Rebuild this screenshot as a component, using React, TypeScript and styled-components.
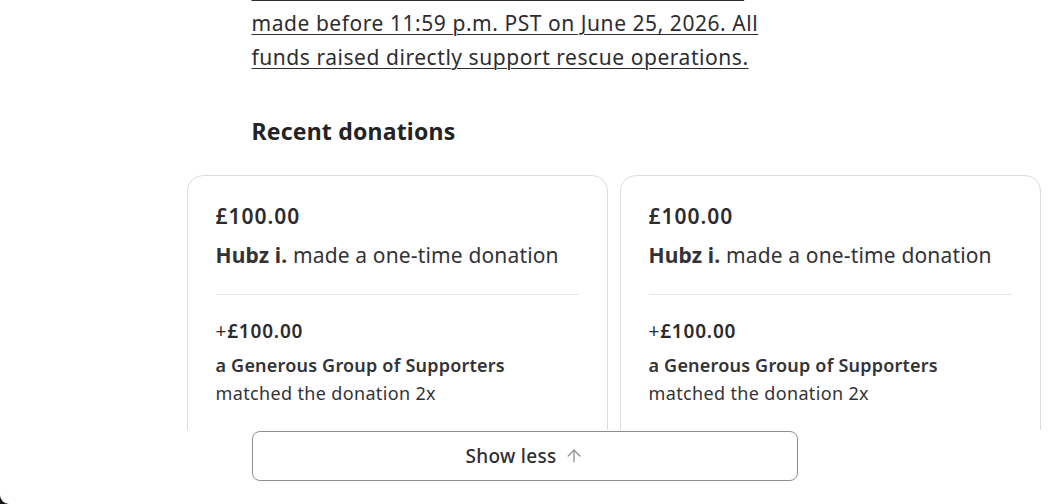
import React from "react";
import styled, { createGlobalStyle } from "styled-components";
import { ArrowUp } from "lucide-react";

const GlobalStyle = createGlobalStyle`
  html, body {
    margin: 0;
    padding: 0;
    background: #141414;
  }
  body {
    font-family: "Noto Sans", "Open Sans", "Liberation Sans", sans-serif;
    color: #2d2d2f;
    -webkit-font-smoothing: antialiased;
  }
  * { box-sizing: border-box; }
`;

const Panel = styled.div`
  width: 100%;
  height: 504px;
  background: #ffffff;
  overflow: hidden;
  border-bottom-left-radius: 9px;
`;

const Column = styled.div`
  width: 546px;
  margin: 0 auto;
`;

const Description = styled.p`
  margin: -28px 0 0;
  font-size: 21px;
  line-height: 34px;
  font-weight: 400;
  letter-spacing: 0.55px;
  white-space: nowrap;
  color: #2d2d2f;
  text-decoration: underline;
  text-decoration-thickness: 1px;
  text-underline-offset: 3px;
`;

const Heading = styled.h2`
  margin: 43px 0 0;
  font-size: 23px;
  line-height: 28px;
  font-weight: 700;
  letter-spacing: 0.2px;
  color: #232325;
`;

const Carousel = styled.div`
  margin-top: 30px;
  height: 255px;
  overflow: hidden;
`;

const Track = styled.div`
  display: flex;
  gap: 12px;
  padding-left: calc(50% - 338px);
`;

const Card = styled.div`
  flex: 0 0 421px;
  border: 1px solid #dcdcdc;
  border-radius: 16px;
  padding: 26px 28px 28px;
  background: #fff;
  height: 300px;
`;

const Amount = styled.div`
  font-size: 21px;
  line-height: 28px;
  font-weight: 600;
  letter-spacing: 1px;
  color: #2b2b2d;
`;

const Donor = styled.div`
  margin-top: 11px;
  font-size: 21px;
  line-height: 28px;
  font-weight: 400;
  letter-spacing: 0.15px;
  color: #333336;
  b {
    font-weight: 700;
  }
`;

const Divider = styled.hr`
  margin: 25px 0 0;
  border: 0;
  border-top: 1px solid #e6e6e6;
`;

const MatchAmount = styled.div`
  margin-top: 23px;
  font-size: 19px;
  line-height: 26px;
  font-weight: 600;
  letter-spacing: 0.8px;
  color: #2b2b2d;
  span {
    font-weight: 400;
  }
`;

const Matcher = styled.div`
  margin-top: 7px;
  font-size: 18px;
  line-height: 28px;
  letter-spacing: 0.35px;
  color: #333336;
`;

const MatcherName = styled.div`
  font-weight: 600;
  letter-spacing: 0.2px;
`;

const ShowLess = styled.button`
  margin-top: 1px;
  width: 546px;
  height: 50px;
  display: flex;
  align-items: center;
  justify-content: center;
  gap: 7px;
  background: #fff;
  border: 1px solid #8e8f93;
  border-radius: 8px;
  font-family: inherit;
  font-size: 19px;
  font-weight: 500;
  letter-spacing: 0.3px;
  color: #2d2d2f;
  cursor: pointer;
  svg {
    color: #8a8c92;
  }
`;

const donations = [1, 2, 3];

export default function App() {
  return (
    <>
      <GlobalStyle />
      <Panel>
        <Column>
          <Description>
            Donations matched 2x, to £5k, for all donations
            <br />
            made before 11:59 p.m. PST on June 25, 2026. All
            <br />
            funds raised directly support rescue operations.
          </Description>
          <Heading>Recent donations</Heading>
        </Column>
        <Carousel>
          <Track>
            {donations.map((d) => (
              <Card key={d}>
                <Amount>£100.00</Amount>
                <Donor>
                  <b>Hubz i.</b> made a one-time donation
                </Donor>
                <Divider />
                <MatchAmount>
                  <span>+</span>£100.00
                </MatchAmount>
                <Matcher>
                  <MatcherName>a Generous Group of Supporters</MatcherName>
                  matched the donation 2x
                </Matcher>
              </Card>
            ))}
          </Track>
        </Carousel>
        <Column>
          <ShowLess type="button">
            Show less
            <ArrowUp size={20} strokeWidth={1.5} />
          </ShowLess>
        </Column>
      </Panel>
    </>
  );
}
